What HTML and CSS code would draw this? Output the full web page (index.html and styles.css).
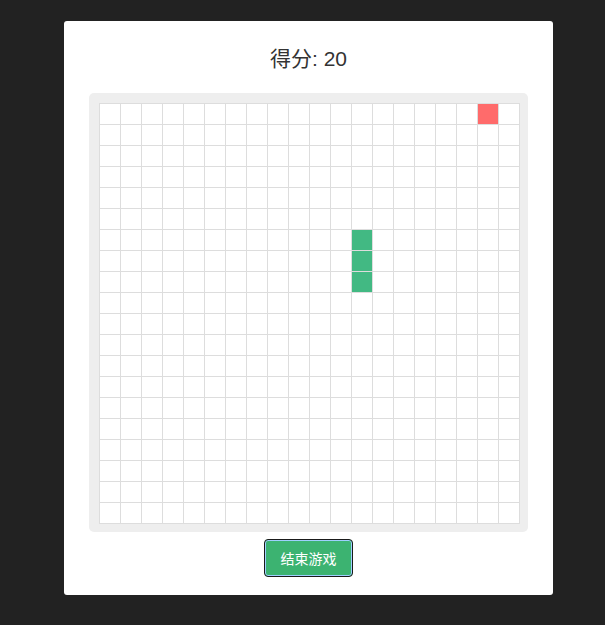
FILE: index.html
```html
<!DOCTYPE html>
<html lang="zh-CN">
<head>
    <meta charset="UTF-8">
    <meta name="viewport" content="width=device-width, initial-scale=1.0">
    <title>贪吃蛇</title>
    <link rel="stylesheet" href="styles.css">
</head>
<body>
    <div class="game">
        <h2 class="score">得分: <span id="score">20</span></h2>
        <div class="board">
            <div id="grid" class="grid"></div>
        </div>
        <button id="endBtn" class="end-btn" onclick="endGame()">结束游戏</button>
    </div>

    <script>
        var SIZE = 20;
        var snake = [{x: 12, y: 6}, {x: 12, y: 7}, {x: 12, y: 8}];
        var food = {x: 18, y: 0};

        function draw() {
            var grid = document.getElementById('grid');
            grid.innerHTML = '';
            for (var y = 0; y < SIZE; y++) {
                for (var x = 0; x < SIZE; x++) {
                    var cell = document.createElement('div');
                    cell.className = 'cell';
                    if (snake.some(function(s) { return s.x === x && s.y === y; })) {
                        cell.className += ' snake';
                    } else if (food.x === x && food.y === y) {
                        cell.className += ' food';
                    }
                    grid.appendChild(cell);
                }
            }
        }

        function endGame() {
            snake = [];
            draw();
        }

        draw();
        document.getElementById('endBtn').focus();
    </script>
</body>
</html>
```

FILE: styles.css
```css
body {
    font-family: "Liberation Sans", "Noto Sans CJK SC", sans-serif;
    margin: 0;
    padding: 21px 52px 31px 64px;
    background-color: #222222;
    color: #333333;
}

.game {
    width: 489px;
    box-sizing: border-box;
    background-color: #ffffff;
    border-radius: 3px;
    padding: 24px 25px 18px;
    display: flex;
    flex-direction: column;
    align-items: center;
}

.score {
    margin: 0 0 20px;
    font-size: 21px;
    line-height: 28px;
    font-weight: normal;
    color: #333333;
}

.board {
    align-self: stretch;
    background-color: #eeeeee;
    border-radius: 5px;
    padding: 10px 8px 8px 10px;
}

.grid {
    display: grid;
    grid-template-columns: repeat(20, 20px);
    grid-auto-rows: 20px;
    gap: 1px;
    padding: 1px;
    width: max-content;
    background-color: #dddddd;
}

.cell {
    background-color: #ffffff;
}

.cell.snake {
    background-color: #42b983;
}

.cell.food {
    background-color: #ff6b6b;
}

.end-btn {
    margin-top: 7px;
    width: 89px;
    height: 38px;
    background-color: #3cb371;
    color: #ffffff;
    font-family: "Liberation Sans", "Noto Sans CJK SC", sans-serif;
    font-size: 14px;
    border: 1px solid #1a1a1a;
    border-radius: 4px;
    box-shadow: inset 0 0 0 1px #9fd0ff;
    cursor: pointer;
    outline: none;
}

.end-btn:hover {
    background-color: #2e9e5e;
}
```
